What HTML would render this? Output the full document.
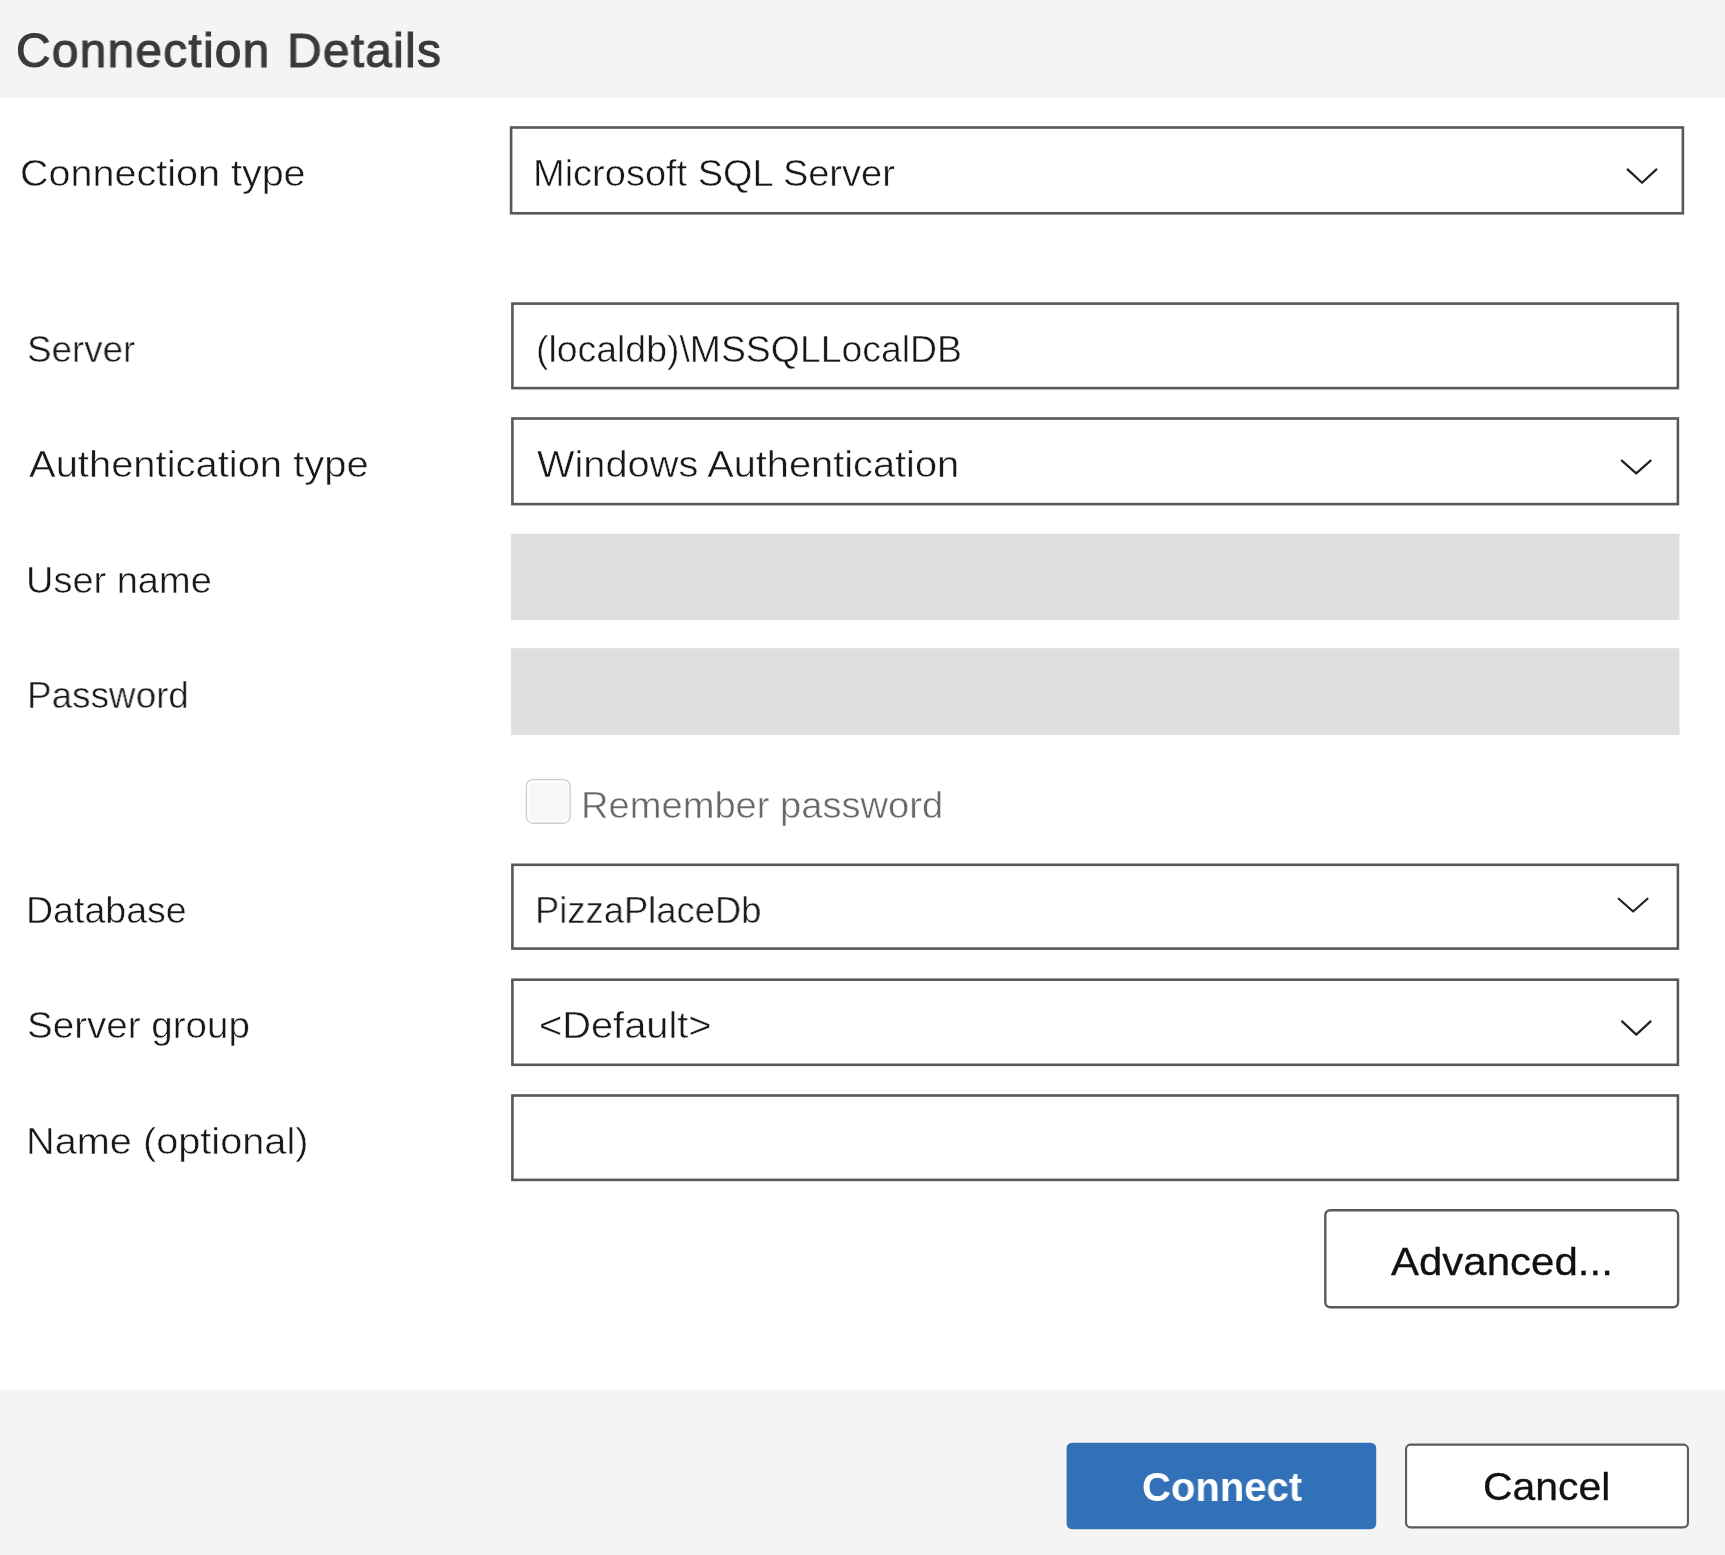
<!DOCTYPE html>
<html lang="en">
<head>
<meta charset="utf-8">
<title>Connection Details</title>
<style>
html,body{margin:0;padding:0;background:#fff;}
body{width:1725px;height:1555px;overflow:hidden;position:relative;font-family:"Liberation Sans",sans-serif;}
#shapes{position:absolute;left:0;top:0;width:1725px;height:1555px;display:block;}
.t{position:absolute;margin:0;padding:0;border:0;background:none;font-family:inherit;white-space:pre;line-height:1;transform-origin:0 50%;display:inline-block;will-change:transform;-webkit-appearance:none;appearance:none;}
</style>
</head>
<body>
<svg id="shapes" width="1725" height="1555" viewBox="0 0 1725 1555">
<rect x="0" y="0" width="1725" height="97.8" fill="#f4f4f2"/>
<rect x="0" y="1389.8" width="1725" height="165.2" fill="#f4f4f2"/>
<rect x="511.10" y="127.50" width="1171.80" height="85.80" rx="0" fill="#fff" stroke="#585858" stroke-width="2.6"/>
<rect x="512.40" y="303.60" width="1165.50" height="84.50" rx="0" fill="#fff" stroke="#585858" stroke-width="2.6"/>
<rect x="512.40" y="418.50" width="1165.50" height="85.60" rx="0" fill="#fff" stroke="#585858" stroke-width="2.6"/>
<rect x="511.1" y="533.7" width="1168.4" height="86.5" fill="#dfdfdf"/>
<rect x="511.1" y="648.2" width="1168.4" height="86.8" fill="#dfdfdf"/>
<rect x="526.35" y="779.65" width="43.80" height="43.60" rx="6.5" fill="#fdfdfd" stroke="#cdcdcd" stroke-width="1.3"/>
<rect x="529.2" y="782.5" width="38.1" height="37.9" rx="3.5" fill="#f8f8f8"/>
<rect x="512.40" y="864.80" width="1165.50" height="83.80" rx="0" fill="#fff" stroke="#585858" stroke-width="2.6"/>
<rect x="512.40" y="979.70" width="1165.50" height="85.10" rx="0" fill="#fff" stroke="#585858" stroke-width="2.6"/>
<rect x="512.40" y="1095.50" width="1165.50" height="84.40" rx="0" fill="#fff" stroke="#585858" stroke-width="2.6"/>
<rect x="1325.30" y="1210.20" width="352.80" height="97.10" rx="5" fill="#fff" stroke="#5c5957" stroke-width="2.4"/>
<rect x="1066.6" y="1442.7" width="309.6" height="86.5" rx="5.5" fill="#3271b7"/>
<rect x="1406.05" y="1444.65" width="281.90" height="82.70" rx="4.5" fill="#fff" stroke="#5e5b59" stroke-width="2.1"/>
<polyline points="1627.6,169.4 1642.0,182.8 1656.4,169.4" fill="none" stroke="#222" stroke-width="2.2" stroke-linecap="round" stroke-linejoin="round"/>
<polyline points="1621.8,460.6 1636.2,473.4 1650.6,460.6" fill="none" stroke="#222" stroke-width="2.2" stroke-linecap="round" stroke-linejoin="round"/>
<polyline points="1618.7,898.7 1633.1,911.5 1647.5,898.7" fill="none" stroke="#222" stroke-width="2.2" stroke-linecap="round" stroke-linejoin="round"/>
<polyline points="1622.1,1021.4 1636.3,1034.6 1650.6,1021.4" fill="none" stroke="#222" stroke-width="2.2" stroke-linecap="round" stroke-linejoin="round"/>
</svg>
<header>
<h1 class="t" id="title" style="left:16.46px;top:27.21px;font-size:48px;font-weight:400;color:#3a3a3a;-webkit-text-stroke:1.1px #3a3a3a;letter-spacing:1.3px;word-spacing:2px;transform:scaleX(0.9950)">Connection Details</h1>
</header>
<main>
<label class="t" id="l1" style="left:20.07px;top:155.21px;font-size:37.4px;font-weight:400;color:#181818;-webkit-text-stroke:0.5px #fff;transform:scaleX(1.0569)">Connection type</label>
<label class="t" id="l2" style="left:27.01px;top:330.90px;font-size:37.4px;font-weight:400;color:#181818;-webkit-text-stroke:0.5px #fff;transform:scaleX(0.9820)">Server</label>
<label class="t" id="l3" style="left:28.62px;top:446.21px;font-size:37.4px;font-weight:400;color:#181818;-webkit-text-stroke:0.5px #fff;transform:scaleX(1.0679)">Authentication type</label>
<label class="t" id="l4" style="left:26.29px;top:562.11px;font-size:37.4px;font-weight:400;color:#181818;-webkit-text-stroke:0.5px #fff;transform:scaleX(1.0158)">User name</label>
<label class="t" id="l5" style="left:27.28px;top:676.90px;font-size:37.4px;font-weight:400;color:#181818;-webkit-text-stroke:0.5px #fff;transform:scaleX(0.9861)">Password</label>
<label class="t" id="l6" style="left:26.42px;top:891.61px;font-size:37.4px;font-weight:400;color:#181818;-webkit-text-stroke:0.5px #fff;transform:scaleX(1.0038)">Database</label>
<label class="t" id="l7" style="left:26.85px;top:1006.90px;font-size:37.4px;font-weight:400;color:#181818;-webkit-text-stroke:0.5px #fff;transform:scaleX(1.0315)">Server group</label>
<label class="t" id="l8" style="left:26.23px;top:1122.81px;font-size:37.4px;font-weight:400;color:#181818;-webkit-text-stroke:0.5px #fff;transform:scaleX(1.0619)">Name (optional)</label>
<div class="t" id="f1" style="left:533.15px;top:154.71px;font-size:37.4px;font-weight:400;color:#181818;-webkit-text-stroke:0.5px #fff;transform:scaleX(1.0163)">Microsoft SQL Server</div>
<div class="t" id="f2" style="left:536.22px;top:330.61px;font-size:37.4px;font-weight:400;color:#181818;-webkit-text-stroke:0.5px #fff;transform:scaleX(1.0000)">(localdb)\MSSQLLocalDB</div>
<div class="t" id="f3" style="left:537.04px;top:445.71px;font-size:37.4px;font-weight:400;color:#181818;-webkit-text-stroke:0.5px #fff;transform:scaleX(1.0634)">Windows Authentication</div>
<div class="t" id="f6" style="left:535.28px;top:891.71px;font-size:37.4px;font-weight:400;color:#181818;-webkit-text-stroke:0.5px #fff;transform:scaleX(0.9724)">PizzaPlaceDb</div>
<div class="t" id="f7" style="left:538.71px;top:1006.51px;font-size:37.4px;font-weight:400;color:#181818;-webkit-text-stroke:0.5px #fff;transform:scaleX(1.0642)">&lt;Default&gt;</div>
<label class="t" id="rem" style="left:580.65px;top:786.60px;font-size:37.4px;font-weight:400;color:#686868;-webkit-text-stroke:0.5px #fff;transform:scaleX(1.0193)">Remember password</label>
<button type="button" class="t" id="adv" style="left:1391.25px;top:1241.50px;font-size:39.5px;font-weight:400;color:#111111;-webkit-text-stroke:0.3px #111111;transform:scaleX(1.0633)">Advanced...</button>
</main>
<footer>
<button type="button" class="t" id="con" style="left:1141.59px;top:1467.00px;font-size:40.5px;font-weight:700;color:#ffffff;transform:scaleX(0.9886)">Connect</button>
<button type="button" class="t" id="can" style="left:1482.99px;top:1467.21px;font-size:39.5px;font-weight:400;color:#111111;-webkit-text-stroke:0.3px #111111;transform:scaleX(1.0357)">Cancel</button>
</footer>
</body>
</html>
